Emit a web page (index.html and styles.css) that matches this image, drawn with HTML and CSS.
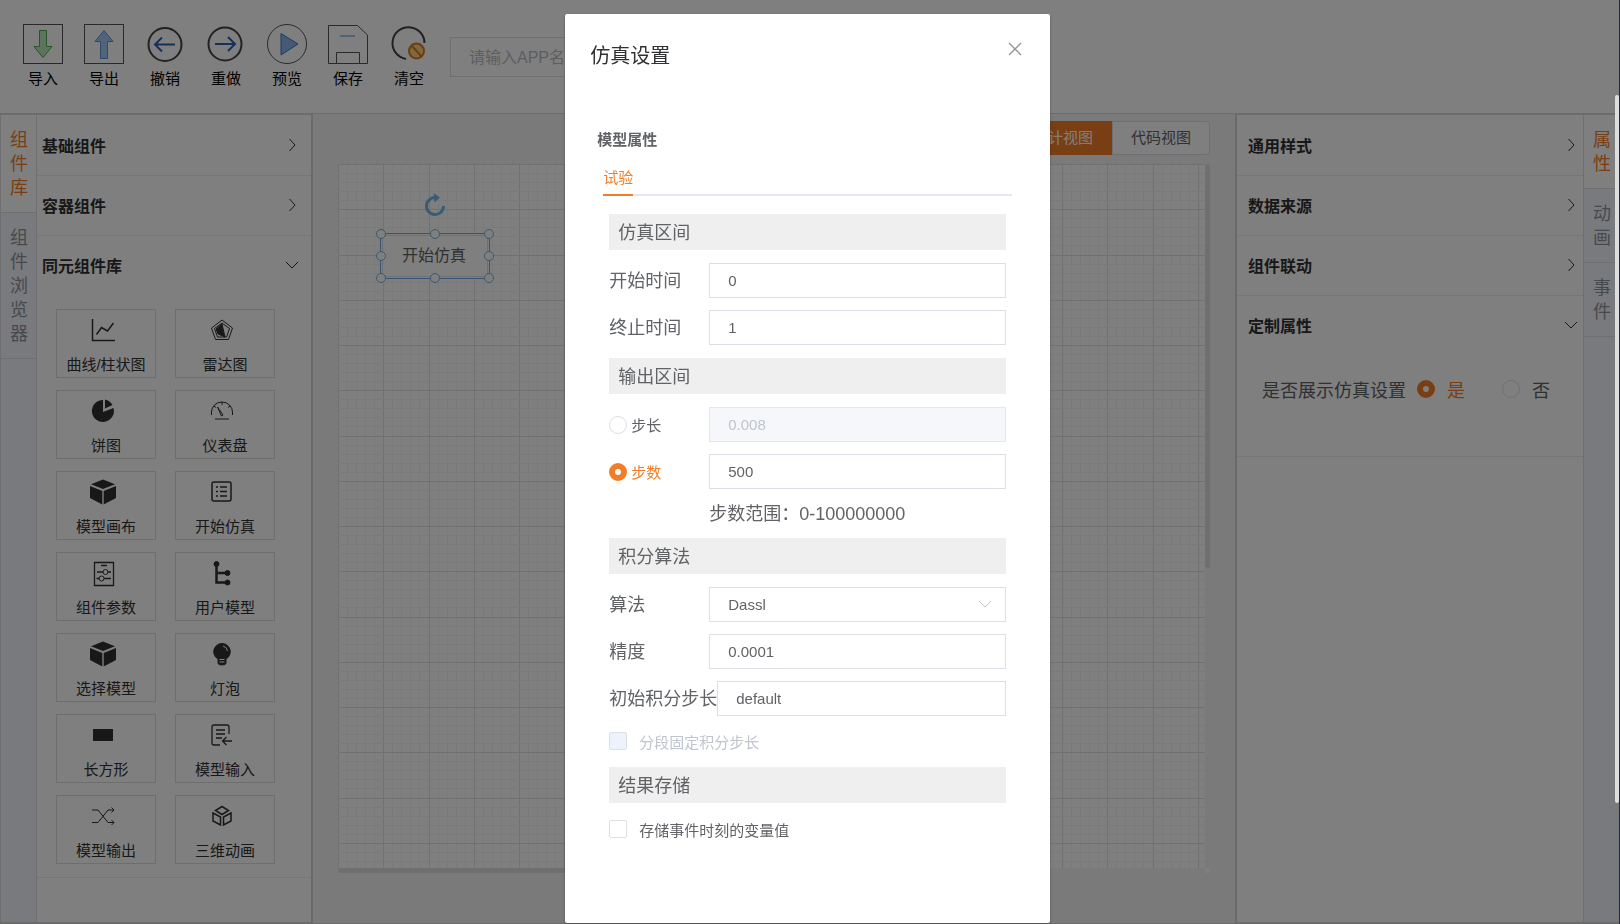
FILE: index.html
```html
<!DOCTYPE html>
<html lang="zh-CN">
<head>
<meta charset="utf-8">
<title>仿真设置</title>
<link rel="stylesheet" href="styles.css">
</head>
<body>
<svg class="defs" aria-hidden="true">
  <symbol id="right" viewBox="0 0 14 14"><path d="M4.500 1l5.500 6-5.500 6" fill="none" stroke="currentColor"/></symbol>
  <symbol id="down" viewBox="0 0 14 14"><path d="M1 4l6 6 6-6" fill="none" stroke="currentColor"/></symbol>
  <symbol id="cube" viewBox="0 0 28 28"><path d="M14 1.500L26 6.300 14 11 2 6.300z M1 8l12.300 5v13.500L1 20z M27 8l-12.300 5v13.500L27 20z"/></symbol>
</svg>
<div class="app">
  <header class="toolbar">
    <button class="tool"><svg viewBox="0 0 40 40"><rect x=".5" y=".5" width="39" height="39" fill="none" stroke="#555"/><path d="M16.500 6.500h7v16h5.500L20 33.500l-9-11h5.500z" fill="#bfe8b8" stroke="#4fa850"/></svg>导入</button>
    <button class="tool"><svg viewBox="0 0 40 40"><rect x=".5" y=".5" width="39" height="39" fill="none" stroke="#555"/><path d="M16.500 34.500h7v-17h5.500L20 6.500l-9 11h5.500z" fill="#a3c8f2" stroke="#5b94d8"/></svg>导出</button>
    <button class="tool"><svg viewBox="0 0 40 40" fill="none" stroke-width="2"><circle cx="20" cy="20.500" r="16.500" stroke="#444"/><path d="M30 20.500H10M17 13.500l-7 7 7 7" stroke="#2b62b0"/></svg>撤销</button>
    <button class="tool"><svg viewBox="0 0 40 40" fill="none" stroke-width="2"><circle cx="19" cy="20" r="16.500" stroke="#444"/><path d="M9 20h20M22 13l7 7-7 7" stroke="#2b62b0"/></svg>重做</button>
    <button class="tool"><svg viewBox="0 0 40 40"><circle cx="20" cy="20" r="19.500" fill="none" stroke="#555"/><path d="M14 9.500v21.500L31 20z" fill="#8ab4e6" stroke="#3b73c4"/></svg>预览</button>
    <button class="tool"><svg viewBox="0 0 40 40" fill="none" stroke="#555"><path d="M.5 1.500h29l10 9.500v28.500H.5z"/><path d="M8.500 39V28.500h23V39"/><path d="M12 12h15" stroke="#7fb2ec" stroke-width="1.500"/></svg>保存</button>
    <button class="tool"><svg viewBox="0 0 40 40" fill="none" stroke-width="2"><path d="M35.500 19A16 16 0 1 0 17 35" stroke="#444"/><circle cx="27.500" cy="27" r="7.500" fill="#ffd283" stroke="#d87a25"/><path d="M22.500 21.500l10 11" stroke="#d87a25"/></svg>清空</button>
    <input class="app-name" type="text" placeholder="请输入APP名称" aria-label="APP名称">
  </header>

  <div class="body">
    <aside class="side side-left">
      <nav class="vtabs vtabs-left">
        <button class="vtab active">组件库</button>
        <button class="vtab">组件浏览器</button>
      </nav>
      <div class="panel">
        <section class="fold"><button class="fold-head">基础组件<svg class="chev"><use href="#right"/></svg></button></section>
        <section class="fold"><button class="fold-head">容器组件<svg class="chev"><use href="#right"/></svg></button></section>
        <section class="fold">
          <button class="fold-head">同元组件库<svg class="chev"><use href="#down"/></svg></button>
          <div class="cards">
            <button class="card"><svg viewBox="0 0 28 28" class="line"><path d="M3.500 3v21.500H26M7.500 18.500l5-7 6 3.500 6-8" stroke-width="1.500"/></svg>曲线/柱状图</button>
            <button class="card"><svg viewBox="0 0 28 28" class="line"><path d="M14 4l10.500 8-4 11.500h-13L3.500 12z M14 7l7.500 5.500-3 8.500h-9l-3-8.500z"/><path d="M14 8l3 13-7-3-2-5z" class="solid"/></svg>雷达图</button>
            <button class="card"><svg viewBox="0 0 28 28"><path d="M14 3a11 11 0 1 0 10.500 8L14 15z"/><path d="M16 2.500v9l7.500-3.500A11 11 0 0 0 16 2.500z"/></svg>饼图</button>
            <button class="card"><svg viewBox="0 0 28 28" class="line"><path d="M3.500 18v-3a10.500 10 0 0 1 21 0v3M7 22h14M14 5v3M6 9l2 1.500M22 9l-2 1.500M9.500 10l4 9 1.500-1z"/></svg>仪表盘</button>
            <button class="card"><svg><use href="#cube"/></svg>模型画布</button>
            <button class="card"><svg viewBox="0 0 28 28" class="line"><rect x="4" y="4" width="19" height="19" rx="2" stroke-width="1.500"/><path d="M8 9h2M12 9h7M8 13.500h2M12 13.500h7M8 18h2M12 18h7" stroke-width="1.500"/></svg>开始仿真</button>
            <button class="card"><svg viewBox="0 0 28 28" class="line"><path d="M5.500 3.500h19v23h-19z" stroke-width="1.300"/><path d="M12 6.500h6M8 13h6M19 13h3M7.500 19.500h3M15 19.500h7" stroke-width="1.300"/><circle cx="16.500" cy="13" r="2.500"/><circle cx="12.500" cy="19.500" r="2.500"/></svg>组件参数</button>
            <button class="card"><svg viewBox="0 0 28 28" class="line"><path d="M8.500 5v18.500h11M8.500 14h11" stroke-width="2.500"/><g class="solid"><circle cx="8.500" cy="5" r="2.500"/><circle cx="19.500" cy="14" r="2.500"/><circle cx="19.500" cy="23.500" r="2.500"/></g></svg>用户模型</button>
            <button class="card"><svg><use href="#cube"/></svg>选择模型</button>
            <button class="card"><svg viewBox="0 0 28 28" class="line"><path d="M10 19a8.300 8.300 0 1 1 8 0v4.500q-1 1.500-4 1.500t-4-1.500z" class="solid"/><path d="M15 6q4 1 4.500 5" stroke="#fff"/><path d="M11.500 19.500h5M11.500 22h5" stroke="#fff"/></svg>灯泡</button>
            <button class="card"><svg viewBox="0 0 28 28"><path d="M4 8h20v12H4z"/></svg>长方形</button>
            <button class="card"><svg viewBox="0 0 28 28" class="line"><path d="M21 13V6q0-2-2-2H6q-2 0-2 2v16q0 2 2 2h6M8 9h9M8 13h9M8 17h6M24 20h-9M18.500 16L14.500 20l4 4" stroke-width="1.300"/></svg>模型输入</button>
            <button class="card"><svg viewBox="0 0 28 28" class="line"><path d="M3 8h6l10 12.500h6M3 20.500h6L19 8h6M22.500 5.500L25 8l-2.500 2.500M22.500 18l2.500 2.500-2.500 2.500"/></svg>模型输出</button>
            <button class="card"><svg viewBox="0 0 28 28" class="line"><path d="M14 4.500l6.500 4-6.500 4-6.500-4z M5 11l7.500 4v8L5 19z M23 11l-7.500 4v8L23 19z" stroke-width="1.500"/></svg>三维动画</button>
          </div>
        </section>
      </div>
    </aside>

    <main class="stage">
      <div class="views">
        <button class="view active">设计视图</button><button class="view">代码视图</button>
      </div>
      <div class="canvas">
        <svg class="grid" aria-hidden="true">
          <defs>
            <pattern id="g" width="181" height="181" patternUnits="userSpaceOnUse">
              <g id="cols">
                <path class="minor" d="M9.500 0v181M18.500 0v181M27.500 0v181M36.500 0v181M54.500 0v181M63.500 0v181M72.500 0v181M81.500 0v181M100.500 0v181M109.500 0v181M118.500 0v181M127.500 0v181M145.500 0v181M154.500 0v181M163.500 0v181M172.500 0v181"/>
                <path class="major" d="M.5 0v181M45.500 0v181M91.500 0v181M136.500 0v181"/>
              </g>
              <use href="#cols" transform="matrix(0 1 1 0 0 0)"/>
            </pattern>
          </defs>
          <rect width="100%" height="100%" fill="url(#g)"/>
        </svg>
        <div class="widget">
          <svg class="rotate" viewBox="0 0 24 24"><path d="M20.500 13a8.500 8.500 0 1 1-7-8.300" fill="none" stroke="currentColor" stroke-width="3"/><path d="M10.500 0l6.500 4.500-5.500 5z" fill="currentColor"/></svg>
          <button class="widget-btn">开始仿真</button>
          <i class="h n w"></i><i class="h n c"></i><i class="h n e"></i><i class="h m w"></i><i class="h m e"></i><i class="h s w"></i><i class="h s c"></i><i class="h s e"></i>
        </div>
        <div class="bar-v"></div><div class="bar-h"></div><div class="corner"></div>
      </div>
    </main>

    <aside class="side side-right">
      <div class="panel">
        <section class="fold"><button class="fold-head">通用样式<svg class="chev"><use href="#right"/></svg></button></section>
        <section class="fold"><button class="fold-head">数据来源<svg class="chev"><use href="#right"/></svg></button></section>
        <section class="fold"><button class="fold-head">组件联动<svg class="chev"><use href="#right"/></svg></button></section>
        <section class="fold">
          <button class="fold-head">定制属性<svg class="chev"><use href="#down"/></svg></button>
          <div class="choice">
            <span>是否展示仿真设置</span>
            <label class="opt"><input type="radio" name="show" checked>是</label>
            <label class="opt"><input type="radio" name="show">否</label>
          </div>
        </section>
      </div>
      <nav class="vtabs vtabs-right">
        <button class="vtab active">属性</button>
        <button class="vtab">动画</button>
        <button class="vtab">事件</button>
      </nav>
    </aside>
  </div>
</div>

<div class="overlay">
  <div class="dialog" role="dialog" aria-labelledby="title">
    <header class="dialog-head">
      <h1 id="title">仿真设置</h1>
      <button class="close" aria-label="关闭"><svg viewBox="0 0 14 14"><path d="M1 1l12 12M13 1L1 13" stroke="currentColor" stroke-width="1.300"/></svg></button>
    </header>
    <h2>模型属性</h2>
    <div class="tabs"><button class="tab">试验</button></div>
    <form class="form">
      <h3>仿真区间</h3>
      <div class="row"><label class="name" for="start">开始时间</label><input class="field" id="start" type="text" value="0"></div>
      <div class="row"><label class="name" for="stop">终止时间</label><input class="field" id="stop" type="text" value="1"></div>
      <h3>输出区间</h3>
      <div class="row"><label class="name pick"><input type="radio" name="mode">步长</label><input class="field" type="text" value="0.008" aria-label="步长" disabled></div>
      <div class="row"><label class="name pick"><input type="radio" name="mode" checked>步数</label><input class="field" type="text" value="500" aria-label="步数"></div>
      <p class="hint">步数范围：0-100000000</p>
      <h3>积分算法</h3>
      <div class="row"><label class="name" for="algo">算法</label><div class="select"><select class="field" id="algo"><option>Dassl</option></select><svg class="chev"><use href="#down"/></svg></div></div>
      <div class="row"><label class="name" for="tol">精度</label><input class="field" id="tol" type="text" value="0.0001"></div>
      <div class="row"><label class="name" for="init">初始积分步长</label><input class="field" id="init" type="text" value="default"></div>
      <label class="check off"><input type="checkbox" disabled>分段固定积分步长</label>
      <h3>结果存储</h3>
      <label class="check"><input type="checkbox">存储事件时刻的变量值</label>
    </form>
  </div>
  <div class="page-bar"></div>
</div>
</body>
</html>
```

FILE: styles.css
```css
* { box-sizing: border-box; }
:root { --accent: #f27d26; --line: #dcdfe6; --text: #606266; }
body { margin: 0; font-family: "Liberation Sans", "Noto Sans CJK SC", sans-serif; font-size: 15px; color: #303133; overflow: hidden; }
button, input, select { font: inherit; color: inherit; margin: 0; }
button { border: 0; padding: 0; background: none; cursor: pointer; }
h1, h2, h3, p { margin: 0; font-weight: 400; }
.defs { position: absolute; width: 0; height: 0; }

.app { display: flex; flex-direction: column; height: 100vh; background: #fff; border-bottom: 1px solid #d6d6d6; }
.toolbar { display: flex; align-items: flex-start; gap: 1px; height: 114px; padding: 24px 13px 20px; border-bottom: 1px solid #d8d8dc; }
.tool { display: flex; flex-direction: column; align-items: center; gap: 4px; width: 60px; line-height: 22px; color: #000; }
.tool svg { flex: none; width: 40px; height: 40px; }
.app-name { width: 260px; height: 40px; margin: 13px 0 0 10px; padding: 2px 18px 0; border: 1px solid var(--line); font-size: 16px; background: #fff; }
.app-name::placeholder { color: #b8bcc4; }

.body { display: flex; flex: 1; min-height: 0; }
.side { display: flex; background: #fff; border: solid #d8d8dc; border-width: 1px 0; }
.side-left { width: 313px; border-right: 2px solid #d4d4d6; }
.side-right { width: 385px; border-left: 2px solid #d4d4d6; }
.vtabs { width: 37px; background: #f2f5fa; border: 0 solid #dedfe3; }
.vtabs-left { border-width: 0 1px; }
.vtabs-right { border-left-width: 1px; }
.vtab { display: block; width: 100%; padding: 13px 8px 12px 9px; border-bottom: 1px solid #dedfe3; font-size: 18px; line-height: 24px; color: #909399; white-space: normal; }
.vtabs-right .vtab { padding: 13px 9px 12px; }
.vtab.active { color: var(--accent); background: #fff; }
.panel { flex: 1; min-width: 0; padding-top: 1px; }
.fold { border-bottom: 1px solid #ebedf2; }
.fold-head { display: flex; align-items: center; justify-content: space-between; width: 100%; height: 59px; padding: 0 12px 1px 5px; font-size: 16px; font-weight: 700; color: #303133; }
.side-right .fold-head { padding: 0 5px 1px 11px; }
.chev { width: 14px; height: 14px; }
.cards { display: grid; grid-template-columns: 100px 100px; gap: 12px 19px; padding: 14px 19px 13px; }
.card { display: flex; flex-direction: column; align-items: center; height: 69px; padding-top: 6px; border: 1px solid #dcdcdc; line-height: 22px; gap: 10px; color: #303133; }
.card svg { width: 28px; height: 28px; margin-right: 6px; fill: #303133; }
.card .line { fill: none; stroke: #303133; }
.card .solid { fill: #303133; }

.stage { flex: 1; min-width: 0; display: flex; flex-direction: column; padding: 7px 25px 50px; background: #f4f4f4; }
.views { display: flex; justify-content: flex-end; margin-bottom: 9px; }
.view { width: 98px; height: 34px; padding-bottom: 3px; border: 1px solid var(--line); border-radius: 0 4px 4px 0; background: #fff; color: var(--text); }
.view.active { border-color: var(--accent); border-radius: 4px 0 0 4px; background: var(--accent); color: #fff; }
.canvas { position: relative; flex: 1; padding: 69px 0 0 42px; }
.grid { position: absolute; left: 0; top: 0; width: calc(100% - 5px); height: calc(100% - 5px); background: #fff; }
.minor { stroke: #f5f5f5; fill: none; }
.major { stroke: #e2e2e2; fill: none; }
.bar-v, .bar-h, .corner { position: absolute; background: #dedede; border-radius: 3px; }
.bar-v { right: 0; top: 0; width: 5px; height: 57%; }
.bar-h { left: 0; bottom: 0; height: 5px; width: 60%; }
.corner { right: 0; bottom: 0; width: 5px; height: 5px; background: #fff; border-radius: 0; }
.widget { position: relative; width: 110px; height: 46px; padding: 1px; border: 1px solid #70a8e0; background: #fff; color: #70b8e8; }
.widget-btn { width: 100%; height: 100%; padding: 0 2px 4px 0; border: 1px solid var(--line); font-size: 16px; color: var(--text); }
.rotate { position: absolute; left: 42px; top: -41px; width: 24px; height: 24px; }
.h { position: absolute; width: 10px; height: 10px; border: 1px solid #70b8e0; border-radius: 50%; background: #fff; }
.n { top: -5px; } .m { top: 17px; } .s { bottom: -5px; }
.w { left: -5px; } .c { left: 49px; } .e { right: -5px; }

.choice { display: flex; align-items: center; height: 101px; padding: 0 0 34px 25px; font-size: 18px; color: var(--text); white-space: nowrap; }
.choice span { margin-right: 11px; }
.opt { display: flex; flex: none; align-items: center; gap: 12px; margin-right: 37px; }
.opt:last-child { margin-right: 0; }
.opt:has(:checked), .pick:has(:checked) { color: var(--accent); }
input[type="radio"], input[type="checkbox"] { appearance: none; flex: none; width: 18px; height: 18px; border: 1px solid var(--line); background: #fff; }
input[type="radio"] { border-radius: 50%; }
input[type="radio"]:checked { border: 6px solid var(--accent); }
input[type="checkbox"] { border-radius: 2px; }
input[type="checkbox"]:disabled { background: #edf2fc; }

.overlay { position: fixed; inset: 0; padding: 14px 4px 0 0; background: rgba(0, 0, 0, .5); border-right: 1px solid #1c2850; }
.dialog { width: 30%; height: calc(100% - 1px); margin: 0 auto; padding: 0 38px; border-radius: 2px; background: #fff; color: var(--text); box-shadow: 0 1px 3px rgba(0, 0, 0, .3); }
.dialog-head { display: flex; justify-content: space-between; margin: 0 -10px 0 -13px; padding-top: 25px; }
.dialog h1 { padding-top: 2px; font-size: 20px; line-height: 30px; color: #303133; }
.close { height: 20px; color: #909399; }
.close svg { display: block; width: 14px; height: 14px; }
.dialog h2 { margin: 57px 0 0 -6px; font-size: 15px; line-height: 24px; font-weight: 700; }
.tabs { margin-top: 10px; border-bottom: 2px solid #e4e7ed; height: 34px; }
.tab { height: 34px; padding-bottom: 4px; border-bottom: 2px solid var(--accent); color: var(--accent); }
.form { display: flex; flex-direction: column; gap: 12px; padding: 17px 6px 0; }
.form h3 { height: 36px; margin: 1px 0; padding: 0 9px; background: #efefef; font-size: 18px; line-height: 38px; }
.row { display: flex; height: 35px; align-items: center; }
.name { flex: none; min-width: 100px; padding-bottom: 3px; font-size: 18px; white-space: nowrap; }
.pick { display: flex; align-items: center; gap: 4px; padding-bottom: 0; font-size: 15px; }
.field { flex: 1; min-width: 0; width: 100%; height: 35px; padding: 0 18px 1px; border: 1px solid var(--line); border-radius: 0; background: #fff; color: var(--text); }
.field:disabled { border-color: #e4e7ed; background: #f5f7fa; color: #c0c4cc; }
.select { position: relative; flex: 1; }
.select .field { display: block; appearance: none; }
.select .chev { position: absolute; right: 14px; top: 10px; color: #c0c4cc; pointer-events: none; }
.hint { margin-left: 100px; padding-top: 2px; font-size: 18px; line-height: 22px; }
.check { display: flex; align-items: center; gap: 12px; height: 26px; }
.off { color: #c0c4cc; }
.page-bar { position: absolute; right: 0; top: 95px; bottom: 121px; width: 4px; border-radius: 2px; background: #dedede; }
```
